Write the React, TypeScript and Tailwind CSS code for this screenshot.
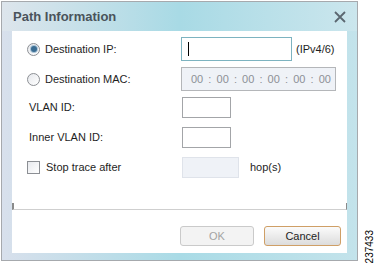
function Radio({ checked }: { checked?: boolean }) {
  return (
    <span className="flex h-[13px] w-[13px] shrink-0 items-center justify-center rounded-full border border-[#8c8f94] bg-gradient-to-br from-[#e6e8ec] to-[#ffffff]">
      {checked && (
        <span className="h-[6px] w-[6px] rounded-full bg-[#3a6d93] shadow-[0_0_0_1px_#a9c3d6]" />
      )}
    </span>
  );
}

export default function App() {
  const font = { fontFamily: '"Liberation Sans", Arial, sans-serif' };
  return (
    <div className="flex h-[265px] w-[377px] bg-white pl-[1px] pt-[1px] text-[11px] text-[#1e1e1e]" style={font}>
      <div className="flex h-[260px] w-[357px] flex-col border border-[#a6a9ad] bg-gradient-to-r from-[#d8e0ec] via-[#a9dbe6] to-[#c3e3eb]">
        {/* title bar */}
        <div className="flex h-[29px] items-center justify-between bg-gradient-to-r from-[#dde5ec] via-[#a8dae5] to-[#cbe6ed] pl-[11px] pr-[11px]">
          <span className="text-[13px] font-bold text-[#4a535b]">Path Information</span>
          <svg width="12" height="12" viewBox="0 0 12 12" className="mt-[1px]">
            <path d="M1 1 L11 11 M11 1 L1 11" stroke="#5b6770" strokeWidth="1.8" />
          </svg>
        </div>

        <div className="flex flex-1 px-[10px] pb-[7px]">
          <div className="flex w-[335px] flex-col bg-white pt-[6px]">
            <div className="flex h-[24px] items-center">
              <div className="flex w-[169px] items-center gap-[5px] pl-[15px]">
                <Radio checked />
                <span>Destination IP:</span>
              </div>
              <div className="flex h-[24px] w-[111px] items-center border border-[#7db3c0] bg-white pl-[6px]">
                <span className="h-[14px] w-[1px] bg-black" />
              </div>
              <span className="ml-[4px]">(IPv4/6)</span>
            </div>

            <div className="mt-[6px] flex h-[24px] items-center">
              <div className="flex w-[169px] items-center gap-[5px] pl-[15px]">
                <Radio />
                <span>Destination MAC:</span>
              </div>
              <div className="flex h-[24px] w-[155px] items-center justify-between border border-[#b4b6b9] bg-[#eff2f7] pl-[9px] pr-[4px] text-[#8d9096]">
                {['00', ':', '00', ':', '00', ':', '00', ':', '00', ':', '00'].map((t, i) => (
                  <span key={i}>{t}</span>
                ))}
              </div>
            </div>

            <div className="mt-[6px] flex h-[21px] items-center">
              <div className="w-[170px] pl-[17px]">VLAN ID:</div>
              <div className="h-[21px] w-[49px] border border-[#a3a5a8] bg-white" />
            </div>

            <div className="mt-[9px] flex h-[21px] items-center">
              <div className="w-[170px] pl-[17px]">Inner VLAN ID:</div>
              <div className="h-[21px] w-[49px] border border-[#a3a5a8] bg-white" />
            </div>

            <div className="mt-[9px] flex h-[21px] items-center">
              <div className="flex w-[170px] items-center gap-[6px] pl-[15px]">
                <span className="h-[13px] w-[13px] border border-[#8c8f94] bg-gradient-to-br from-[#e8eaee] to-white" />
                <span>Stop trace after</span>
              </div>
              <div className="h-[21px] w-[57px] border border-[#dfe3ea] bg-[#eff2f7]" />
              <span className="ml-[11px]">hop(s)</span>
            </div>

            <div className="mt-[25px] h-[7px] border-x border-b border-x-[#8a8a8a] border-b-[#cfcfcf] [border-left-width:2px]" />

            <div className="mt-[16px] flex justify-end gap-[10px] pr-[6px]">
              <button className="h-[20px] w-[74px] rounded-[3px] border border-[#cacaca] bg-[#f3f3f3] text-[11px] text-[#a3a3a3]">
                OK
              </button>
              <button className="h-[20px] w-[77px] rounded-[3px] border border-[#cf9f66] bg-gradient-to-b from-[#fbfbfb] to-[#dcdcdc] text-[11px] text-[#1e1e1e]">
                Cancel
              </button>
            </div>
          </div>
        </div>
      </div>

      <div className="flex flex-1 flex-col justify-end pb-[2px] pl-[4px]">
        <span className="rotate-180 text-[10px] text-black [writing-mode:vertical-rl]">237433</span>
      </div>
    </div>
  );
}
